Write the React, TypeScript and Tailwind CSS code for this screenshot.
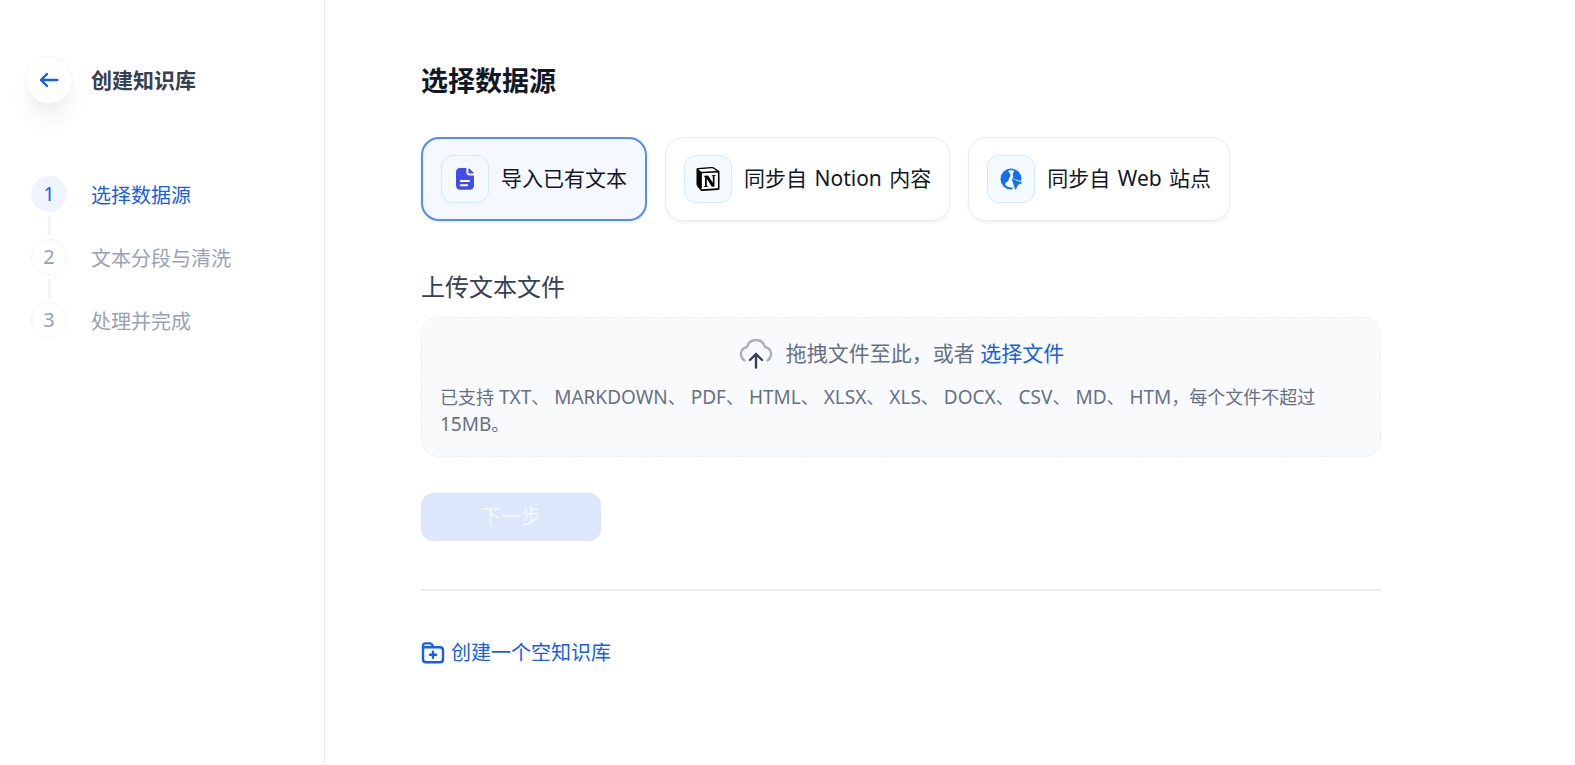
import { Fragment } from "react";
import { SiNotion } from "react-icons/si";
import clsx from "clsx";

const steps = ["选择数据源", "文本分段与清洗", "处理并完成"];

const formats = ["TXT", "MARKDOWN", "PDF", "HTML", "XLSX", "XLS", "DOCX", "CSV", "MD", "HTM"];

const ArrowIcon = () => (
  <svg className="size-6" viewBox="0 0 24 24" fill="none" stroke="currentColor" strokeWidth="2.4" strokeLinecap="round" strokeLinejoin="round">
    <path d="M10 18l-6-6 6-6M4 12h16.4" />
  </svg>
);

const FileIcon = () => (
  <svg className="size-6 text-[#444ce7]" viewBox="0 0 24 24" fill="currentColor">
    <path d="M7.2 1H13.4V5.6C13.4 7.4 14.6 8.6 16.4 8.6H21V18.6C21 21.2 19.4 22.8 16.8 22.8H7.2C4.6 22.8 3 21.2 3 18.6V5.2C3 2.6 4.6 1 7.2 1Z" />
    <path d="M15.4 1.9C15.4 1.4 16 1.2 16.4 1.6L20.4 5.6C20.8 6 20.6 6.6 20 6.6H16.4C15.8 6.6 15.4 6.2 15.4 5.6Z" />
    <path d="M7.8 14H16M7.8 18.2H14.2" stroke="#fff" strokeWidth="1.9" strokeLinecap="round" />
  </svg>
);

const NotionIcon = () => (
  <svg className="size-6" viewBox="0 0 24 24">
    <path d="M1.5 2L17.5 1L22.5 5V22L6 23L1.5 18Z" fill="#fff" />
    <path d="M1.8 2.8L5.8 6V21.8L1.8 17Z" fill="#000" />
    <SiNotion size={24} color="#000" />
  </svg>
);

const WebIcon = () => (
  <svg className="size-6" viewBox="0 0 24 24">
    <circle cx="12" cy="12" r="10.5" fill="#1570ef" />
    <path
      d="M9.4 3.8C11 3.2 13.6 3.2 15.2 3.8C15.2 5.4 13.8 5.8 13.8 7.2C13.8 8.4 14.8 9.2 14 10.4L13 11.2L23.5 14.6V18L19.4 19.6L17 24H13.6V20.8C10.8 20.8 8.2 20 6.2 17.8C6 16.2 7 15.2 8.6 14.6C10.2 14 9.2 12 10.2 10.8C11.4 9.6 12 9 11.2 7.2C10.8 6 9.4 5.4 9.4 3.8Z"
      fill="#f5faff"
    />
    <path d="M13.4 12.4L22.6 15.8L18.4 17.7L16.6 22.2Z" fill="#1570ef" stroke="#1570ef" strokeLinejoin="round" />
  </svg>
);

const UploadIcon = () => (
  <svg className="size-9" viewBox="0 0 36 36" fill="none" strokeLinecap="round" strokeLinejoin="round">
    <path d="M6.4 24.4C3.8 22.6 2.8 20 3 17.4C3.3 14.2 5.6 11.6 9 11C10.2 6.8 13.8 4 18 4C22.2 4 25.8 6.8 27 11C30.4 11.6 32.7 14.2 33 17.4C33.2 20 32.2 22.6 29.6 24.4" stroke="#a9b0bd" strokeWidth="2.4" />
    <path d="M18 31.5V18M12 24L18 18L24 24" stroke="#344054" strokeWidth="2.4" />
  </svg>
);

const FolderPlusIcon = () => (
  <svg className="size-6" viewBox="0 0 24 24" fill="none" stroke="currentColor" strokeWidth="2.4" strokeLinecap="round" strokeLinejoin="round">
    <path d="M2 6.2V18.2C2 20.2 3 21.2 5 21.2H19C21 21.2 22 20.2 22 18.2V9.2C22 7.2 21 6.2 19 6.2H2V5C2 3.2 2.8 2.4 4.4 2.4H8.8C10 2.4 10.6 2.8 11.2 3.8L12.4 6.2" />
    <path d="M12 10.6V16.8M8.9 13.7H15.1" />
  </svg>
);

const sources = [
  { label: "导入已有文本", icon: <FileIcon /> },
  { label: <>同步自 <span className="mx-0.5">Notion</span> 内容</>, icon: <NotionIcon /> },
  { label: <>同步自 <span className="mx-0.5">Web</span> 站点</>, icon: <WebIcon /> },
];

const Sidebar = () => (
  <aside className="w-[325px] shrink-0 border-r border-[#eaecf0] pt-14">
    <div className="flex items-center gap-[18px] pl-[25px]">
      <button
        type="button"
        aria-label="返回"
        className="flex size-12 items-center justify-center rounded-full border border-[#f2f4f7] bg-white text-[#155eef] shadow-[0_18px_24px_-6px_rgba(16,24,40,0.08),0_6px_9px_-3px_rgba(16,24,40,0.03)]"
      >
        <ArrowIcon />
      </button>
      <h2 className="text-[21px] leading-8 font-bold text-[#344054]">创建知识库</h2>
    </div>
    <ol className="mt-[72px] pl-[31px]">
      {steps.map((step, index) => (
        <li key={step} className="flex gap-6">
          <div className="flex flex-col items-center">
            <span
              className={clsx(
                "flex size-9 items-center justify-center rounded-full border text-[20px]",
                index === 0 ? "border-[#eff4ff] bg-[#eff4ff] text-[#155eef]" : "border-[#f2f4f7] text-[#98a2b3]"
              )}
            >
              {index + 1}
            </span>
            {index < steps.length - 1 && <span className="my-1 h-[19px] w-[3px] bg-[#f2f4f7]" />}
          </div>
          <span className={clsx("text-[20px] leading-10", index === 0 ? "text-[#155eef]" : "text-[#98a2b3]")}>{step}</span>
        </li>
      ))}
    </ol>
  </aside>
);

const App = () => {
  return (
    <div className="flex min-h-screen bg-white font-['Noto_Sans','Noto_Sans_CJK_SC',sans-serif]">
      <Sidebar />
      <main className="min-w-0 flex-1 px-24 pt-[60px]">
        <div className="max-w-[960px]">
          <h1 className="text-[27px] leading-[42px] font-bold text-[#101828]">选择数据源</h1>
          <div className="mt-[35px] flex gap-[18px]">
            {sources.map((source, index) => (
              <button
                key={index}
                type="button"
                className={clsx(
                  "flex h-[84px] items-center gap-3 rounded-[18px] px-[18px] text-[21px] whitespace-nowrap text-[#101828] shadow-[0_2px_3px_rgba(16,24,40,0.05)]",
                  index === 0 ? "border-2 border-[#528bff] bg-[#f5f8ff]" : "border border-[#eaecf0] bg-white"
                )}
              >
                <span className="flex size-12 items-center justify-center rounded-xl border border-[#d1e9ff] bg-[#f5faff]">
                  {source.icon}
                </span>
                <span>{source.label}</span>
              </button>
            ))}
          </div>

          <h3 className="mt-12 text-[24px] leading-9 text-[#344054]">上传文本文件</h3>
          <div className="mt-3 rounded-[18px] border border-dashed border-[#eaecf0] bg-[#f9fafb] p-[18px] text-[#667085]">
            <div className="flex h-9 items-center justify-center gap-3 text-[21px]">
              <UploadIcon />
              <span>
                拖拽文件至此，或者{" "}
                <label htmlFor="file" className="cursor-pointer text-[#155eef]">选择文件</label>
              </span>
              <input id="file" type="file" className="hidden" />
            </div>
            <p className="mt-3 text-[18px] leading-[27px]">
              已支持
              {formats.map((format, index) => (
                <Fragment key={format}>
                  <span className="text-[19px]"> {format}</span>
                  {index < formats.length - 1 ? "、" : "，"}
                </Fragment>
              ))}
              每个文件不超过 <span className="text-[19px]">15MB</span>。
            </p>
          </div>

          <button type="button" disabled className="mt-9 h-12 w-[180px] rounded-xl bg-[#dce7fc] text-[20px] text-[#f3f7fe]">
            下一步
          </button>
          <hr className="my-12 border-t-2 border-[#eaecf0]" />
          <a href="#" className="inline-flex items-center gap-[6px] text-[20px] leading-7 text-[#155eef]">
            <FolderPlusIcon />
            创建一个空知识库
          </a>
        </div>
      </main>
    </div>
  );
};

export default App;
